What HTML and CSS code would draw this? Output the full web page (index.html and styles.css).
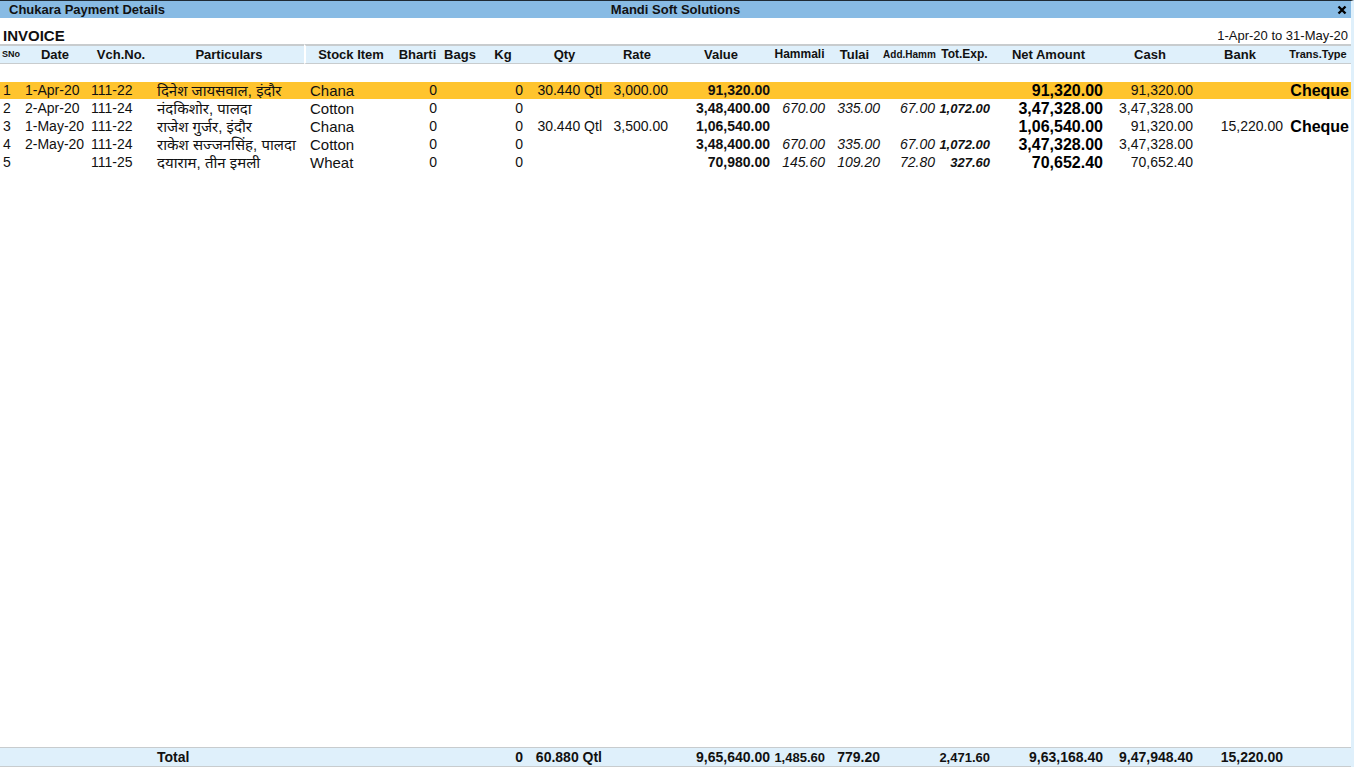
FILE: index.html
```
<!DOCTYPE html>
<html lang="en">
<head>
  <meta charset="utf-8">
  <meta name="viewport" content="width=device-width">
  <title>Chukara Payment Details</title>
  <link rel="stylesheet" href="styles.css">
</head>
<body>
  <div class="window">
    <!-- Title bar -->
    <header class="title-bar">
      <h1>Chukara Payment Details</h1>
      <span class="company">Mandi Soft Solutions</span>
      <button class="close" type="button" aria-label="Close">
        <svg viewBox="0 0 10 10" width="10" height="10"><path d="M1.5 1.5 L8.5 8.5 M8.5 1.5 L1.5 8.5" stroke="#000" stroke-width="2.4"/></svg>
      </button>
    </header>

    <div class="report-head">
      <h2>INVOICE</h2>
      <span class="period">1-Apr-20 to 31-May-20</span>
    </div>

    <!-- Payment register -->
    <div class="report">
      <table>
        <colgroup>
          <col class="w-sno">
          <col class="w-date">
          <col class="w-vch">
          <col class="w-name">
          <col class="w-stock">
          <col class="w-bharti">
          <col class="w-bags">
          <col class="w-kg">
          <col class="w-qty">
          <col class="w-rate">
          <col class="w-value">
          <col class="w-exp">
          <col class="w-exp">
          <col class="w-exp">
          <col class="w-exp">
          <col class="w-net">
          <col class="w-cash">
          <col class="w-bank">
          <col class="w-type">
        </colgroup>
        <thead>
          <tr>
            <th class="tiny">SNo</th>
            <th>Date</th>
            <th>Vch.No.</th>
            <th>Particulars</th>
            <th class="divider">Stock Item</th>
            <th>Bharti</th>
            <th>Bags</th>
            <th>Kg</th>
            <th>Qty</th>
            <th>Rate</th>
            <th>Value</th>
            <th class="small">Hammali</th>
            <th>Tulai</th>
            <th class="narrow">Add.Hamm</th>
            <th class="small">Tot.Exp.</th>
            <th>Net Amount</th>
            <th>Cash</th>
            <th>Bank</th>
            <th class="compact">Trans.Type</th>
          </tr>
        </thead>
        <tbody>
          <tr class="gap"><td colspan="19"></td></tr>
          <tr class="selected">
            <td>1</td><td>1-Apr-20</td><td>111-22</td>
            <td class="name" lang="hi"><span>दिनेश जायसवाल, इंदौर</span></td>
            <td class="stock">Chana</td>
            <td class="num">0</td><td></td><td class="num">0</td>
            <td class="num">30.440 Qtl</td><td class="num">3,000.00</td>
            <td class="num value">91,320.00</td>
            <td></td><td></td><td></td><td></td>
            <td class="num net">91,320.00</td><td class="num">91,320.00</td>
            <td></td><td class="num net">Cheque</td>
          </tr>
          <tr>
            <td>2</td><td>2-Apr-20</td><td>111-24</td>
            <td class="name" lang="hi"><span>नंदकिशोर, पालदा</span></td>
            <td class="stock">Cotton</td>
            <td class="num">0</td><td></td><td class="num">0</td>
            <td></td><td></td>
            <td class="num value">3,48,400.00</td>
            <td class="num exp">670.00</td><td class="num exp">335.00</td><td class="num exp">67.00</td><td class="num exp-total">1,072.00</td>
            <td class="num net">3,47,328.00</td><td class="num">3,47,328.00</td>
            <td></td><td></td>
          </tr>
          <tr>
            <td>3</td><td>1-May-20</td><td>111-22</td>
            <td class="name" lang="hi"><span>राजेश गुर्जर, इंदौर</span></td>
            <td class="stock">Chana</td>
            <td class="num">0</td><td></td><td class="num">0</td>
            <td class="num">30.440 Qtl</td><td class="num">3,500.00</td>
            <td class="num value">1,06,540.00</td>
            <td></td><td></td><td></td><td></td>
            <td class="num net">1,06,540.00</td><td class="num">91,320.00</td>
            <td class="num">15,220.00</td><td class="num net">Cheque</td>
          </tr>
          <tr>
            <td>4</td><td>2-May-20</td><td>111-24</td>
            <td class="name" lang="hi"><span>राकेश सज्जनसिंह, पालदा</span></td>
            <td class="stock">Cotton</td>
            <td class="num">0</td><td></td><td class="num">0</td>
            <td></td><td></td>
            <td class="num value">3,48,400.00</td>
            <td class="num exp">670.00</td><td class="num exp">335.00</td><td class="num exp">67.00</td><td class="num exp-total">1,072.00</td>
            <td class="num net">3,47,328.00</td><td class="num">3,47,328.00</td>
            <td></td><td></td>
          </tr>
          <tr>
            <td>5</td><td></td><td>111-25</td>
            <td class="name" lang="hi"><span>दयाराम, तीन इमली</span></td>
            <td class="stock">Wheat</td>
            <td class="num">0</td><td></td><td class="num">0</td>
            <td></td><td></td>
            <td class="num value">70,980.00</td>
            <td class="num exp">145.60</td><td class="num exp">109.20</td><td class="num exp">72.80</td><td class="num exp-total">327.60</td>
            <td class="num net">70,652.40</td><td class="num">70,652.40</td>
            <td></td><td></td>
          </tr>
          <tr class="filler"><td colspan="19"></td></tr>
        </tbody>
        <tfoot>
          <tr>
            <td colspan="3"></td>
            <td class="name">Total</td>
            <td colspan="3"></td>
            <td class="num">0</td>
            <td class="num">60.880 Qtl</td>
            <td></td>
            <td class="num">9,65,640.00</td>
            <td class="num sub">1,485.60</td>
            <td class="num">779.20</td>
            <td></td>
            <td class="num sub">2,471.60</td>
            <td class="num">9,63,168.40</td>
            <td class="num">9,47,948.40</td>
            <td class="num">15,220.00</td>
            <td></td>
          </tr>
        </tfoot>
      </table>
    </div>
  </div>
</body>
</html>
```
FILE: styles.css
```
* {
  padding: 0;
  margin: 0;
  box-sizing: border-box;
}

body {
  background-color: #fff;
  color: #111;
  font-family: "Liberation Sans", Arial, "Noto Sans Devanagari", sans-serif;
  font-size: 14px;
  height: 100vh;
  padding: 0 12px 1px 0;
}

.window {
  display: flex;
  flex-direction: column;
  height: 100%;
  border-top: 1px solid #1f2a33;
  border-right: 3px solid #dff0fb;
}

/* Title bar */
.title-bar {
  display: grid;
  grid-template-columns: 1fr auto 1fr;
  align-items: center;
  height: 17px;
  padding: 0 4px;
  background-color: #88bbe4;
  font-size: 13px;
  line-height: 17px;
}

.title-bar h1 {
  padding-left: 5px;
  font-size: 13px;
}

.company {
  font-weight: bold;
}

.close {
  justify-self: end;
  display: flex;
  border: none;
  background: none;
  cursor: pointer;
}

.report-head {
  display: flex;
  justify-content: space-between;
  align-items: flex-end;
  height: 26px;
  padding: 0 3px;
  line-height: 17px;
}

.report-head h2 {
  font-size: 15px;
}

.period {
  font-size: 13px;
}

/* Register table */
.report {
  flex: 1;
  min-height: 0;
}

table {
  width: 100%;
  height: 100%;
  table-layout: fixed;
  border-collapse: separate;
  border-spacing: 0;
}

.w-sno { width: 22px; }
.w-date { width: 66px; }
.w-vch { width: 66px; }
.w-stock { width: 92px; }
.w-bharti { width: 43px; }
.w-bags { width: 42px; }
.w-kg { width: 44px; }
.w-qty { width: 79px; }
.w-rate { width: 66px; }
.w-value { width: 102px; }
.w-exp { width: 55px; }
.w-net { width: 113px; }
.w-cash { width: 90px; }
.w-bank { width: 90px; }
.w-type { width: 66px; }

th {
  height: 20px;
  background-color: #dff0fb;
  border-top: 2px solid #c8ccce;
  border-bottom: 1px solid #c8ccce;
  font-size: 13px;
  line-height: 17px;
  text-align: center;
  white-space: nowrap;
}

th.small { font-size: 12px; }
th.compact { font-size: 11px; }
th.narrow { font-size: 10px; }
th.tiny { font-size: 9px; }

.divider {
  border-left: 2px solid #fff;
}

td {
  height: 18px;
  padding: 0 2px 0 3px;
  line-height: 17px;
  white-space: nowrap;
}

.gap td {
  height: 18px;
}

.selected td {
  height: 17px;
  background-color: #ffc42e;
}

.filler td {
  height: auto;
}

td.num {
  padding-left: 0;
  text-align: right;
}

.name span {
  display: block;
  font-size: 15px;
  height: 17px;
}

td.stock {
  padding-left: 6px;
  font-size: 15px;
}

.value {
  font-weight: bold;
}

.net {
  color: #000;
  font-size: 16px;
  font-weight: bold;
}

.exp {
  font-style: italic;
}

.exp-total {
  font-size: 13px;
  font-style: italic;
  font-weight: bold;
}

tfoot td {
  height: 20px;
  background-color: #dff0fb;
  border-top: 1px solid #c8ccce;
  border-bottom: 1px solid #c8ccce;
  font-weight: bold;
}

tfoot .sub {
  font-size: 13px;
}
```
